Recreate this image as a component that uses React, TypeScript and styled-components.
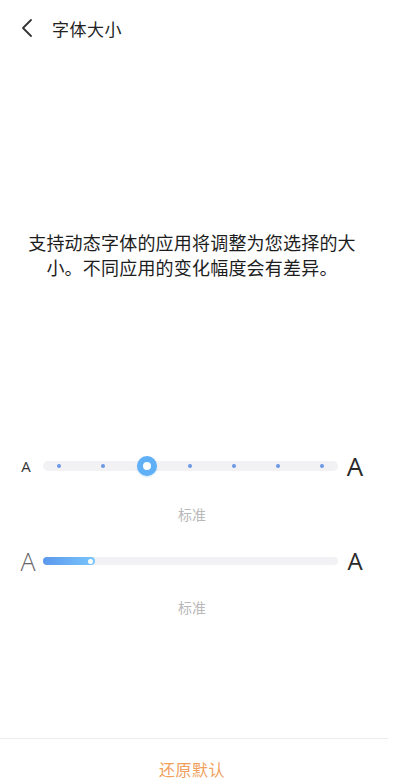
import React from 'react';
import styled, { createGlobalStyle } from 'styled-components';

const GlobalStyle = createGlobalStyle`
    body {
        margin: 0;
        background: #ffffff;
        font-family: "Noto Sans CJK SC", "Noto Sans", sans-serif;
    }
`;

const STEPS = 7;
const CURRENT_STEP = 2;

const Page = styled.div`
    width: 400px;
    height: 780px;
    display: flex;
    flex-direction: column;
    background: #ffffff;
    overflow: hidden;
`;

const Header = styled.div`
    height: 56px;
    display: flex;
    align-items: center;
    padding-left: 18px;
    gap: 16px;
`;

const BackButton = styled.div`
    width: 18px;
    height: 22px;
    display: flex;
    align-items: center;
    justify-content: center;
`;

const Title = styled.div`
    font-size: 17px;
    color: #222;
    letter-spacing: 0.5px;
`;

const Description = styled.p`
    width: 384px;
    margin: 174px 0 0 0;
    padding: 0 18px;
    box-sizing: border-box;
    text-align: center;
    font-size: 18px;
    letter-spacing: 0.2px;
    line-height: 25px;
    color: #1d1d1d;
`;

const Controls = styled.div`
    width: 384px;
    display: flex;
    flex-direction: column;
    margin-top: 171px;
`;

const SliderRow = styled.div`
    height: 30px;
    display: flex;
    align-items: center;
    padding-left: 18px;
`;

const Glyph = styled.span<{ size: number; weight: number; tone: string; boxWidth: number }>`
    width: ${(p) => p.boxWidth}px;
    display: flex;
    justify-content: center;
    font-family: "Open Sans", "Noto Sans", sans-serif;
    font-size: ${(p) => p.size}px;
    font-weight: ${(p) => p.weight};
    color: ${(p) => p.tone};
    line-height: 1;
`;

const Track = styled.div<{ thick: number; lead: number }>`
    position: relative;
    width: 295px;
    height: ${(p) => p.thick}px;
    border-radius: ${(p) => p.thick / 2}px;
    background: #f2f2f4;
    margin: 0 6px 0 ${(p) => p.lead}px;
    display: flex;
    align-items: center;
    justify-content: space-between;
    padding: 0 14px;
    box-sizing: border-box;
`;

const Dot = styled.span`
    width: 4px;
    height: 4px;
    border-radius: 50%;
    background: #6a98e4;
`;

const Thumb = styled.span`
    width: 20px;
    height: 20px;
    margin: 0 -8px;
    border-radius: 50%;
    box-sizing: border-box;
    border: 6px solid #5fb0f6;
    background: #ffffff;
    box-shadow: 0 1px 2px rgba(80, 150, 230, 0.25);
`;

const Fill = styled.div`
    position: absolute;
    left: 0;
    top: 0;
    bottom: 0;
    border-radius: 4px;
    background: linear-gradient(90deg, #5b98ee, #79c6fb);
    display: flex;
    align-items: center;
    justify-content: flex-end;
    padding-right: 2px;
    box-sizing: border-box;
`;

const FillKnob = styled.span`
    width: 5px;
    height: 5px;
    border-radius: 50%;
    background: #ffffff;
`;

const Caption = styled.div<{ gap: number }>`
    margin-top: ${(p) => p.gap}px;
    text-align: center;
    font-size: 14px;
    line-height: 20px;
    color: #b9b9b9;
`;

const Spacer = styled.div`
    height: 22px;
`;

const Footer = styled.div`
    margin-top: auto;
    display: flex;
    flex-direction: column;
`;

const Divider = styled.div`
    width: 388px;
    height: 1px;
    background: #ececec;
`;

const ResetButton = styled.div`
    height: 41px;
    display: flex;
    align-items: flex-end;
    justify-content: center;
    width: 384px;
    font-size: 16px;
    color: #f0a05c;
    letter-spacing: 0.5px;
    line-height: 22px;
`;

const StepSlider: React.FC<{ current: number }> = ({ current }) => (
    <SliderRow>
        <Glyph size={15} weight={400} tone="#333" boxWidth={16}>A</Glyph>
        <Track thick={10} lead={9}>
            {Array.from({ length: STEPS }, (_, i) =>
                i === current ? <Thumb key={i} /> : <Dot key={i} />
            )}
        </Track>
        <Glyph size={26} weight={400} tone="#2a2a2a" boxWidth={22}>A</Glyph>
    </SliderRow>
);

const ProgressSlider: React.FC<{ value: number }> = ({ value }) => (
    <SliderRow>
        <Glyph size={25} weight={300} tone="#666" boxWidth={20}>A</Glyph>
        <Track thick={8} lead={5}>
            <Fill style={{ width: `${value * 100}%` }}>
                <FillKnob />
            </Fill>
        </Track>
        <Glyph size={24} weight={400} tone="#2a2a2a" boxWidth={22}>A</Glyph>
    </SliderRow>
);

export default function App() {
    return (
        <Page>
            <GlobalStyle />
            <Header>
                <BackButton>
                    <svg width="12" height="20" viewBox="0 0 12 20" fill="none">
                        <path d="M10 2 L2 10 L10 18" stroke="#333" strokeWidth="1.8" strokeLinecap="round" strokeLinejoin="round" />
                    </svg>
                </BackButton>
                <Title>字体大小</Title>
            </Header>
            <Description>支持动态字体的应用将调整为您选择的大小。不同应用的变化幅度会有差异。</Description>
            <Controls>
                <StepSlider current={CURRENT_STEP} />
                <Caption gap={23}>标准</Caption>
                <Spacer />
                <ProgressSlider value={0.175} />
                <Caption gap={21}>标准</Caption>
            </Controls>
            <Footer>
                <Divider />
                <ResetButton>还原默认</ResetButton>
            </Footer>
        </Page>
    );
}
